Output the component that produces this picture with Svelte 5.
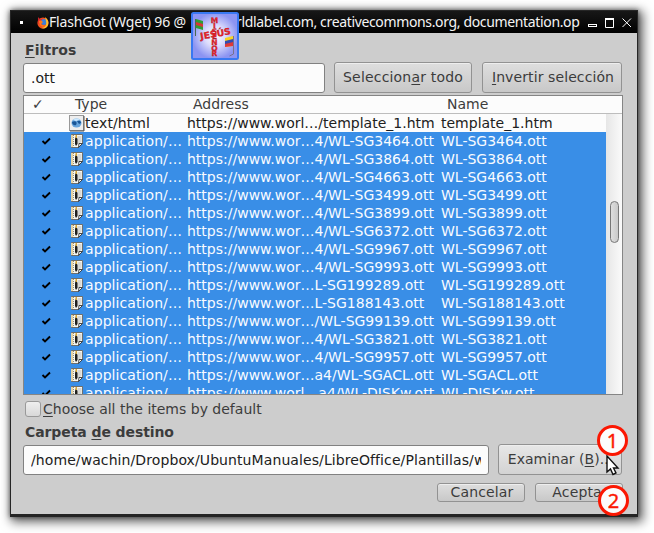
<script>
  const rows = [
    ['https://www.wor…4/WL-SG3464.ott', 'WL-SG3464.ott'],
    ['https://www.wor…4/WL-SG3864.ott', 'WL-SG3864.ott'],
    ['https://www.wor…4/WL-SG4663.ott', 'WL-SG4663.ott'],
    ['https://www.wor…4/WL-SG3499.ott', 'WL-SG3499.ott'],
    ['https://www.wor…4/WL-SG3899.ott', 'WL-SG3899.ott'],
    ['https://www.wor…4/WL-SG6372.ott', 'WL-SG6372.ott'],
    ['https://www.wor…4/WL-SG9967.ott', 'WL-SG9967.ott'],
    ['https://www.wor…4/WL-SG9993.ott', 'WL-SG9993.ott'],
    ['https://www.wor…L-SG199289.ott', 'WL-SG199289.ott'],
    ['https://www.wor…L-SG188143.ott', 'WL-SG188143.ott'],
    ['https://www.wor…/WL-SG99139.ott', 'WL-SG99139.ott'],
    ['https://www.wor…4/WL-SG3821.ott', 'WL-SG3821.ott'],
    ['https://www.wor…4/WL-SG9957.ott', 'WL-SG9957.ott'],
    ['https://www.wor…a4/WL-SGACL.ott', 'WL-SGACL.ott'],
    ['https://www.worl…a4/WL-DISKw.ott', 'WL-DISKw.ott'],
  ];
</script>

<div class="screen">
  <div class="window">
    <header>
      <i class="dot"></i>
      <svg class="fox" width="12" height="13" viewBox="0 0 12 13">
        <circle cx="6" cy="7" r="5.6" fill="#f4511e" />
        <path d="M1 1 3 3.2 6 2.4 4.5 5 7 7 5 9 1.5 8Z" fill="#e0262e" />
        <circle cx="7" cy="6" r="3" fill="#3f7fd6" />
        <path d="M8 1c3 2 4 5 3 8-1 3-4 4-7 3 4 0 6-3 5-7Z" fill="#ffc02a" />
        <path d="M2 5c2-1 3 0 4 1L4 8c1 1 3 2 4 1-1 3-6 2-6-4Z" fill="#ff7a18" />
      </svg>
      <span class="title t1">FlashGot (Wget) 96 @</span>
      <span class="title t2">rldlabel.com, creativecommons.org, documentation.op</span>
      <svg class="controls" width="46" height="14" viewBox="0 0 46 14" fill="none" stroke="#fff">
        <rect x="1.5" y="9.5" width="8" height="2" />
        <path d="M18.500 4v8.500h8V4" /><path d="M18 4h9" stroke-width="2" />
        <path d="m35.500 3.500 8.500 8.500m0-8.500-8.500 8.500" />
      </svg>
    </header>

    <main>
      <div class="heading h1"><u>F</u>iltros</div>
      <div class="filters">
        <div class="field ott">.ott</div>
        <div class="button select">Seleccion<u>a</u>r todo</div>
        <div class="button invert"><u>I</u>nvertir selección</div>
      </div>

      <div class="tree">
        <div class="cols head">
          <span class="mark">✓</span><span>Type</span><span>Address</span><span>Name</span>
        </div>
        <div class="body">
          <div class="rows">
            <div class="cols row">
              <span></span>
              <svg width="16" height="18" viewBox="0 0 16 18">
                <rect x=".5" y="1.500" width="14" height="15" fill="#eee" stroke="#999" />
                <path d="M15 2v15H1" fill="none" stroke="#555" />
                <ellipse cx="7.500" cy="9" rx="5" ry="4.500" fill="#68a5dd" />
                <path d="M3 8c3-2 6 0 4 3-2 1-4-1-4-3m5-1c2-1 4 0 4 2l-2 1Z" fill="#195596" />
                <path d="M4 6c2-2 5-2 7 0L7 7Z" fill="#cce9ff" />
              </svg>
              <span class="type">text/html</span>
              <span class="addr">https://www.worl…/template_1.htm</span>
              <span class="name">template_1.htm</span>
            </div>
            {#each rows as [address, name]}
              <div class="cols row selected">
                <svg class="tick" width="10" height="18" viewBox="0 0 10 18"><path d="m1.500 9 2.500 2.500 5-5" fill="none" stroke="#000" stroke-width="1.900" /></svg>
                <svg width="16" height="18" viewBox="0 0 16 18">
                  <path d="M2.500 2.500h11v9l-4 4h-7Z" fill="#f7f7f1" stroke="#6a655c" stroke-width=".9" />
                  <path d="M8.500 5h4M8.500 7h4M8.500 9h4M8.500 11h3" stroke="#aaa" stroke-width=".8" />
                  <path d="M2 3h2v12H2Z" fill="#e6d3a4" /><path d="M4.500 3v12" stroke="#77715e" stroke-dasharray="1 1" stroke-width=".8" />
                  <path d="m6 7 1-3 1.500 3v5L7 14l-1-2Z" fill="#201f1c" /><path d="M6.500 3H8v3H6.500Z" fill="#d8a534" />
                  <path d="m9.500 15.500.5-4h3.500Z" fill="#fff" stroke="#333" stroke-width=".9" />
                </svg>
                <span class="type">application/…</span>
                <span class="addr">{address}</span>
                <span class="name">{name}</span>
              </div>
            {/each}
          </div>
          <div class="scroll"><div class="thumb"></div></div>
        </div>
      </div>

      <div class="choose"><i></i><span><u>C</u>hoose all the items by default</span></div>
      <div class="heading h2">Carpeta <u>d</u>e destino</div>
      <div class="folder">
        <div class="field path"><span>/home/wachin/Dropbox/UbuntuManuales/LibreOffice/Plantillas/w</span></div>
        <div class="button browse">Examinar (<u>B</u>)...</div>
      </div>
      <div class="actions">
        <div class="button cancel">Cancelar</div>
        <div class="button accept">Aceptar</div>
      </div>
    </main>
  </div>

  <svg class="badge" width="50" height="50" viewBox="0 0 50 50">
    <defs><radialGradient id="glow"><stop offset="0" stop-color="#fff" /><stop offset=".45" stop-color="#dcdcfc" /><stop offset="1" stop-color="#8c94f2" /></radialGradient></defs>
    <rect x="1" y="2" width="46" height="46" rx="1.500" fill="url(#glow)" stroke="#3978f2" stroke-width="2" />
    <path d="M4.500 8v17" stroke="#486850" /><path d="m5 8 7 2v9l-7-2Z" fill="#2e9d34" /><path d="m5 11 7 2v3l-7-2Z" fill="#d83635" />
    <path d="m34 27 8-2v10l-8 1Z" fill="#f7d524" /><path d="m34 30 8-2v4l-8 2Z" fill="#334caf" /><path d="m34 33 8-2v4l-8 1Z" fill="#df3838" /><path d="M42.500 25v18l-4 2" fill="none" stroke="#77718e" />
    <g class="logo">
      {#each 'MISEÑOR'.split('') as c, i}
        <text x="23.500" y={11.500 + i * 5.600} text-anchor="middle">{c}</text>
      {/each}
      <text class="jesus" x="9" y="26" textLength="31" lengthAdjust="spacingAndGlyphs" transform="rotate(-10 24 23)">JESÚS</text>
    </g>
  </svg>

  <div class="number one">1</div>
  <svg class="cursor" width="14" height="21" viewBox="0 0 14 21"><path d="M1 1v16l3.500-3 2.500 5.500 3-1.500-2.500-5H12Z" fill="#fff" stroke="#111" stroke-width="1.400" /></svg>
  <div class="number two">2</div>
</div>

<style>
  .screen { position: relative; box-sizing: border-box; width: 654px; height: 533px; padding: 10px 0 0 10px; overflow: hidden; background: #fff; font: 14px/18px "DejaVu Sans", sans-serif; color: #3c3c3c; white-space: nowrap; }
  .window { box-sizing: border-box; width: 628px; height: 507px; border: 1px solid #262626; border-bottom: 3px solid #242424; background: #cdcdcd; box-shadow: 3px 3px 10px 2px #0009, 0 0 5px #0008; display: flex; flex-direction: column; }
  header { display: flex; align-items: center; height: 22px; flex: none; background: linear-gradient(#171717, #000); color: #f4f4f4; }
  .dot { width: 3px; height: 3px; background: #fff; margin-left: 9px; }
  .fox { margin-left: 14px; flex: none; }
  .title { font: 14px/22px "Noto Sans", sans-serif; flex: none; }
  .t1 { width: 187px; letter-spacing: -.16px; }
  .t2 { width: 344px; letter-spacing: -.35px; }
  .controls { margin-left: 7px; flex: none; }
  main { padding: 0 14px 0 12px; display: flex; flex-direction: column; }
  .heading { font-weight: bold; margin-left: 2px; }
  u { text-decoration-thickness: 1px; text-underline-offset: 2px; }
  .h1 { margin-top: 8px; height: 21px; letter-spacing: .1px; }
  .filters, .folder, .actions { display: flex; }
  .field { box-sizing: border-box; height: 30px; border: 1px solid #818181; border-radius: 3px; background: #fcfcfc; color: #202020; line-height: 29px; padding: 0 7px; overflow: hidden; }
  .path span { display: block; overflow: hidden; letter-spacing: .09px; }
  .filters .field { margin-top: 1px; }
  .ott { width: 302px; margin-right: 9px; }
  .button { box-sizing: border-box; height: 31px; border: 1px solid #929292; border-radius: 3px; background: linear-gradient(#dedede, #c8c8c8); box-shadow: inset 0 1px #eee; line-height: 29px; text-align: center; }
  .select { width: 138px; margin-right: 10px; letter-spacing: .18px; }
  .invert { width: 140px; letter-spacing: .1px; padding-left: 2px; }
  .tree { box-sizing: border-box; width: 600px; height: 300px; margin-top: 2px; border: 1px solid #858585; background: #fcfcfc; overflow: hidden; }
  .cols { display: grid; align-items: center; }
  .head { grid-template-columns: 51px 118px 254px 1fr; height: 17px; line-height: 16px; align-items: start; border-bottom: 1px solid #bdbdbd; }
  .mark { padding-left: 8px; }
  .body { display: flex; }
  .rows { width: 582px; }
  .row { grid-template-columns: 45px 16px 102px 254px 1fr; height: 18px; color: #202020; }
  .type { letter-spacing: .08px; }
  .selected { background: #398ee7; color: #f8fbff; }
  .tick { margin-left: 16.500px; }
  .scroll { width: 16px; height: 281px; background: linear-gradient(90deg, #e6e6e6, #fafafa); }
  .thumb { box-sizing: border-box; width: 9px; height: 42px; margin: 87px 0 0 4px; border: 1px solid #777; border-radius: 5px; background: linear-gradient(90deg, #dedede, #c9c9c9); }
  .choose { display: flex; height: 18px; margin-top: 5px; padding-left: 2px; gap: 2px; }
  .choose i { box-sizing: border-box; width: 16px; height: 16px; margin-top: 1px; border: 1px solid #999; border-radius: 3px; background: linear-gradient(#efefef, #d8d8d8); }
  .h2 { margin-top: 5px; height: 21px; letter-spacing: -.09px; }
  .folder .field { margin-top: 1px; }
  .path { width: 466px; margin-right: 9px; }
  .browse { width: 124px; background: linear-gradient(#e7e7e7, #d3d3d3); padding-left: 1px; letter-spacing: .05px; }
  .actions { justify-content: flex-end; gap: 10px; margin-top: 8px; }
  .actions .button { height: 19px; line-height: 17px; width: 88px; padding-left: 2px; letter-spacing: .15px; }
  .badge { position: absolute; left: 191px; top: 11px; }
  .logo { font: bold 7.500px "DejaVu Sans", sans-serif; fill: #ee2525; stroke: #9c1730; stroke-width: .3px; }
  .jesus { font-size: 9px; }
  .number { position: absolute; box-sizing: border-box; width: 31px; height: 31px; border: 3px solid #fb1702; border-radius: 50%; background: #fcfcfc; color: #fb1702; font: 20px/25px "Noto Sans", sans-serif; text-align: center; -webkit-text-stroke: .4px #fb1702; }
  .one { left: 597px; top: 425px; }
  .two { left: 598px; top: 485px; }
  .cursor { position: absolute; left: 606px; top: 455px; }
</style>
